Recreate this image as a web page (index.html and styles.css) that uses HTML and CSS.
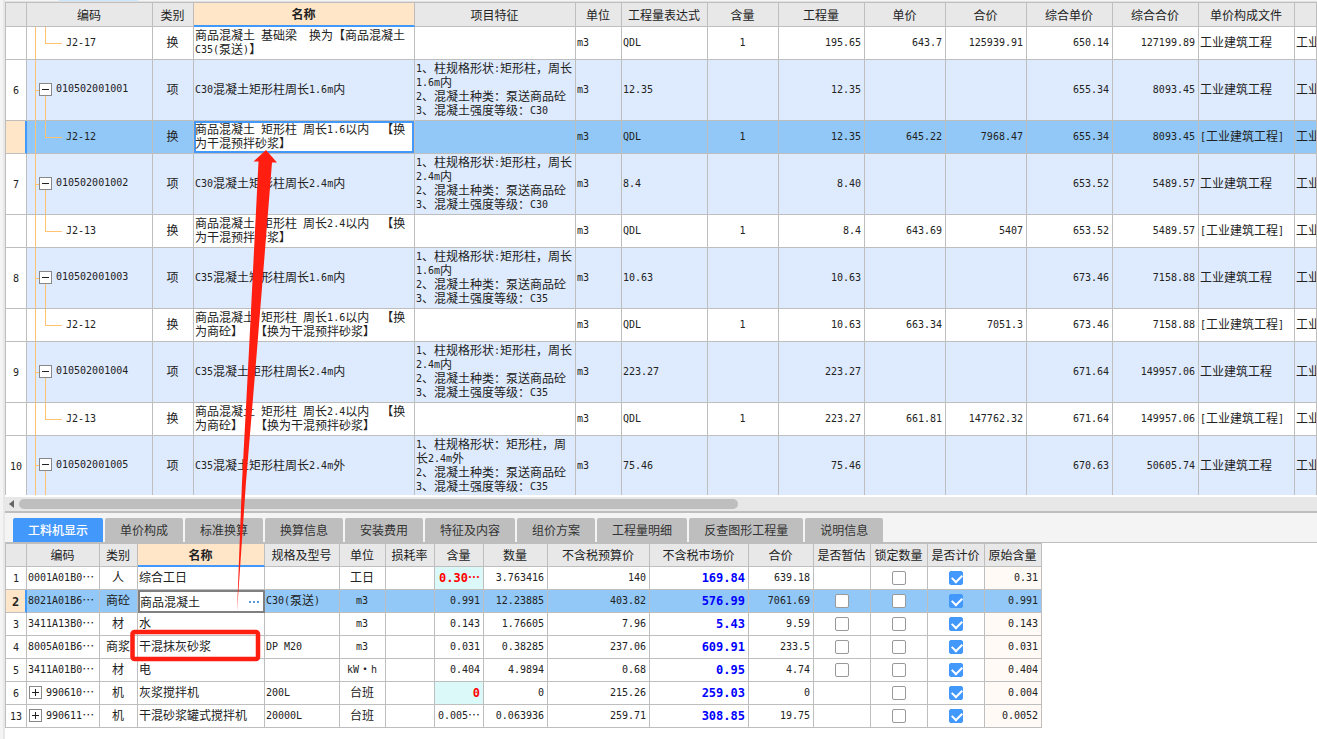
FILE: index.html
```
<!DOCTYPE html>
<html lang="zh-CN">
<head>
<meta charset="utf-8">
<title>工程量清单计价</title>
<link rel="stylesheet" href="styles.css">
</head>
<body>
<div class="gutter"></div>
<main class="main">
<div class="top-strip"></div>
<section class="bill">
<table class="grid bill-grid">
<colgroup><col class="w21"><col class="w126"><col class="w41"><col class="w221"><col class="w161"><col class="w46"><col class="w86"><col class="w71"><col class="w86"><col class="w81"><col class="w81"><col class="w86"><col class="w86"><col class="w96"><col></colgroup>
<thead><tr><th></th><th>编码</th><th>类别</th><th class="active">名称</th><th>项目特征</th><th>单位</th><th>工程量表达式</th><th>含量</th><th>工程量</th><th>单价</th><th>合价</th><th>综合单价</th><th>综合合价</th><th>单价构成文件</th><th></th></tr></thead>
<tbody>
<tr class="sub"><td class="no"></td><td class="tree leaf"><i>J2-17</i></td><td class="c">换</td><td>商品混凝土<i> </i>基础梁<i>  </i>换为【商品混凝土<br><i>C35(</i>泵送<i>)</i>】</td><td></td><td><i>m3</i></td><td><i>QDL</i></td><td class="c"><i>1</i></td><td class="r"><i>195.65</i></td><td class="r"><i>643.7</i></td><td class="r"><i>125939.91</i></td><td class="r"><i>650.14</i></td><td class="r"><i>127199.89</i></td><td>工业建筑工程</td><td>工业建筑工程</td></tr>
<tr class="item"><td class="no"><i>6</i></td><td class="tree node"><div class="code"><button class="toggle minus" aria-label="折叠"></button><i>010502001001</i></div></td><td class="c">项</td><td><i>C30</i>混凝土矩形柱周长<i>1.6m</i>内</td><td><i>1</i>、柱规格形状<i>:</i>矩形柱，周长<br><i>1.6m</i>内<br><i>2</i>、混凝土种类：泵送商品砼<br><i>3</i>、混凝土强度等级：<i>C30</i></td><td><i>m3</i></td><td><i>12.35</i></td><td></td><td class="r"><i>12.35</i></td><td></td><td></td><td class="r"><i>655.34</i></td><td class="r"><i>8093.45</i></td><td>工业建筑工程</td><td>工业建筑工程</td></tr>
<tr class="sub selected"><td class="no"></td><td class="tree leaf"><i>J2-12</i></td><td class="c">换</td><td class="focus">商品混凝土<i> </i>矩形柱<i> </i>周长<i>1.6</i>以内<i>  </i>【换<br>为干混预拌砂浆】</td><td></td><td><i>m3</i></td><td><i>QDL</i></td><td class="c"><i>1</i></td><td class="r"><i>12.35</i></td><td class="r"><i>645.22</i></td><td class="r"><i>7968.47</i></td><td class="r"><i>655.34</i></td><td class="r"><i>8093.45</i></td><td><i>[</i>工业建筑工程<i>]</i></td><td>工业建筑工程</td></tr>
<tr class="item"><td class="no"><i>7</i></td><td class="tree node"><div class="code"><button class="toggle minus" aria-label="折叠"></button><i>010502001002</i></div></td><td class="c">项</td><td><i>C30</i>混凝土矩形柱周长<i>2.4m</i>内</td><td><i>1</i>、柱规格形状<i>:</i>矩形柱，周长<br><i>2.4m</i>内<br><i>2</i>、混凝土种类：泵送商品砼<br><i>3</i>、混凝土强度等级：<i>C30</i></td><td><i>m3</i></td><td><i>8.4</i></td><td></td><td class="r"><i>8.40</i></td><td></td><td></td><td class="r"><i>653.52</i></td><td class="r"><i>5489.57</i></td><td>工业建筑工程</td><td>工业建筑工程</td></tr>
<tr class="sub"><td class="no"></td><td class="tree leaf"><i>J2-13</i></td><td class="c">换</td><td>商品混凝土<i> </i>矩形柱<i> </i>周长<i>2.4</i>以内<i>  </i>【换<br>为干混预拌砂浆】</td><td></td><td><i>m3</i></td><td><i>QDL</i></td><td class="c"><i>1</i></td><td class="r"><i>8.4</i></td><td class="r"><i>643.69</i></td><td class="r"><i>5407</i></td><td class="r"><i>653.52</i></td><td class="r"><i>5489.57</i></td><td><i>[</i>工业建筑工程<i>]</i></td><td>工业建筑工程</td></tr>
<tr class="item"><td class="no"><i>8</i></td><td class="tree node"><div class="code"><button class="toggle minus" aria-label="折叠"></button><i>010502001003</i></div></td><td class="c">项</td><td><i>C35</i>混凝土矩形柱周长<i>1.6m</i>内</td><td><i>1</i>、柱规格形状<i>:</i>矩形柱，周长<br><i>1.6m</i>内<br><i>2</i>、混凝土种类：泵送商品砼<br><i>3</i>、混凝土强度等级：<i>C35</i></td><td><i>m3</i></td><td><i>10.63</i></td><td></td><td class="r"><i>10.63</i></td><td></td><td></td><td class="r"><i>673.46</i></td><td class="r"><i>7158.88</i></td><td>工业建筑工程</td><td>工业建筑工程</td></tr>
<tr class="sub"><td class="no"></td><td class="tree leaf"><i>J2-12</i></td><td class="c">换</td><td>商品混凝土<i> </i>矩形柱<i> </i>周长<i>1.6</i>以内<i>  </i>【换<br>为商砼】<i>  </i>【换为干混预拌砂浆】</td><td></td><td><i>m3</i></td><td><i>QDL</i></td><td class="c"><i>1</i></td><td class="r"><i>10.63</i></td><td class="r"><i>663.34</i></td><td class="r"><i>7051.3</i></td><td class="r"><i>673.46</i></td><td class="r"><i>7158.88</i></td><td><i>[</i>工业建筑工程<i>]</i></td><td>工业建筑工程</td></tr>
<tr class="item"><td class="no"><i>9</i></td><td class="tree node"><div class="code"><button class="toggle minus" aria-label="折叠"></button><i>010502001004</i></div></td><td class="c">项</td><td><i>C35</i>混凝土矩形柱周长<i>2.4m</i>内</td><td><i>1</i>、柱规格形状<i>:</i>矩形柱，周长<br><i>2.4m</i>内<br><i>2</i>、混凝土种类：泵送商品砼<br><i>3</i>、混凝土强度等级：<i>C35</i></td><td><i>m3</i></td><td><i>223.27</i></td><td></td><td class="r"><i>223.27</i></td><td></td><td></td><td class="r"><i>671.64</i></td><td class="r"><i>149957.06</i></td><td>工业建筑工程</td><td>工业建筑工程</td></tr>
<tr class="sub"><td class="no"></td><td class="tree leaf"><i>J2-13</i></td><td class="c">换</td><td>商品混凝土<i> </i>矩形柱<i> </i>周长<i>2.4</i>以内<i>  </i>【换<br>为商砼】<i>  </i>【换为干混预拌砂浆】</td><td></td><td><i>m3</i></td><td><i>QDL</i></td><td class="c"><i>1</i></td><td class="r"><i>223.27</i></td><td class="r"><i>661.81</i></td><td class="r"><i>147762.32</i></td><td class="r"><i>671.64</i></td><td class="r"><i>149957.06</i></td><td><i>[</i>工业建筑工程<i>]</i></td><td>工业建筑工程</td></tr>
<tr class="item last"><td class="no"><i>10</i></td><td class="tree node"><div class="code"><button class="toggle minus" aria-label="折叠"></button><i>010502001005</i></div></td><td class="c">项</td><td><i>C35</i>混凝土矩形柱周长<i>2.4m</i>外</td><td><i>1</i>、柱规格形状：矩形柱，周<br>长<i>2.4m</i>外<br><i>2</i>、混凝土种类：泵送商品砼<br><i>3</i>、混凝土强度等级：<i>C35</i></td><td><i>m3</i></td><td><i>75.46</i></td><td></td><td class="r"><i>75.46</i></td><td></td><td></td><td class="r"><i>670.63</i></td><td class="r"><i>50605.74</i></td><td>工业建筑工程</td><td>工业建筑工程</td></tr>
</tbody>
</table>
</section>
<div class="scrollbar"><svg class="scroll-arrow" viewBox="0 0 5 8"><path d="M5 0v8L0 4z" fill="#666"/></svg><div class="thumb"></div></div>
<nav class="tabs">
<button class="tab on">工料机显示</button><button class="tab">单价构成</button><button class="tab">标准换算</button><button class="tab">换算信息</button><button class="tab">安装费用</button><button class="tab">特征及内容</button><button class="tab">组价方案</button><button class="tab">工程量明细</button><button class="tab">反查图形工程量</button><button class="tab">说明信息</button>
</nav>
<section class="detail">
<table class="grid detail-grid">
<colgroup><col class="w21"><col class="w73"><col class="w38"><col class="w127"><col class="w75"><col class="w46"><col class="w49"><col class="w49"><col class="w64"><col class="w102"><col class="w99"><col class="w65"><col class="w57"><col class="w57"><col class="w57"><col class="w57"></colgroup>
<thead><tr><th></th><th>编码</th><th>类别</th><th class="active">名称</th><th>规格及型号</th><th>单位</th><th>损耗率</th><th>含量</th><th>数量</th><th>不含税预算价</th><th>不含税市场价</th><th>合价</th><th>是否暂估</th><th>锁定数量</th><th>是否计价</th><th>原始含量</th></tr></thead>
<tbody>
<tr><td class="no"><i>1</i></td><td><i>0001A01B0</i>⋯</td><td class="c">人</td><td>综合工日</td><td></td><td class="c">工日</td><td></td><td class="r changed"><b>0.30</b>⋯</td><td class="r"><i>3.763416</i></td><td class="r"><i>140</i></td><td class="r price"><b>169.84</b></td><td class="r"><i>639.18</i></td><td></td><td class="c"><input type="checkbox" aria-label="锁定数量"></td><td class="c"><input type="checkbox" aria-label="是否计价" checked></td><td class="r orig"><i>0.31</i></td></tr>
<tr class="selected"><td class="no"><b>2</b></td><td><i>8021A01B6</i>⋯</td><td class="c">商砼</td><td class="editing"><div class="editor"><input type="text" aria-label="名称" value="商品混凝土"><button class="more" aria-label="更多"><svg viewBox="0 0 11 2"><path d="M0 0h2v2H0zM4 0h2v2H4zM8 0h2v2H8z" fill="#5799d6"/></svg></button></div></td><td><i>C30(</i>泵送<i>)</i></td><td class="c"><i>m3</i></td><td></td><td class="r"><i>0.991</i></td><td class="r"><i>12.23885</i></td><td class="r"><i>403.82</i></td><td class="r price"><b>576.99</b></td><td class="r"><i>7061.69</i></td><td class="c"><input type="checkbox" aria-label="是否暂估"></td><td class="c"><input type="checkbox" aria-label="锁定数量"></td><td class="c"><input type="checkbox" aria-label="是否计价" checked></td><td class="r orig"><i>0.991</i></td></tr>
<tr><td class="no"><i>3</i></td><td><i>3411A13B0</i>⋯</td><td class="c">材</td><td>水</td><td></td><td class="c"><i>m3</i></td><td></td><td class="r"><i>0.143</i></td><td class="r"><i>1.76605</i></td><td class="r"><i>7.96</i></td><td class="r price"><b>5.43</b></td><td class="r"><i>9.59</i></td><td class="c"><input type="checkbox" aria-label="是否暂估"></td><td class="c"><input type="checkbox" aria-label="锁定数量"></td><td class="c"><input type="checkbox" aria-label="是否计价" checked></td><td class="r orig"><i>0.143</i></td></tr>
<tr><td class="no"><i>4</i></td><td><i>8005A01B6</i>⋯</td><td class="c">商浆</td><td>干混抹灰砂浆</td><td><i>DP M20</i></td><td class="c"><i>m3</i></td><td></td><td class="r"><i>0.031</i></td><td class="r"><i>0.38285</i></td><td class="r"><i>237.06</i></td><td class="r price"><b>609.91</b></td><td class="r"><i>233.5</i></td><td class="c"><input type="checkbox" aria-label="是否暂估"></td><td class="c"><input type="checkbox" aria-label="锁定数量"></td><td class="c"><input type="checkbox" aria-label="是否计价" checked></td><td class="r orig"><i>0.031</i></td></tr>
<tr><td class="no"><i>5</i></td><td><i>3411A01B0</i>⋯</td><td class="c">材</td><td>电</td><td></td><td class="c"><i>kW</i>・<i>h</i></td><td></td><td class="r"><i>0.404</i></td><td class="r"><i>4.9894</i></td><td class="r"><i>0.68</i></td><td class="r price"><b>0.95</b></td><td class="r"><i>4.74</i></td><td class="c"><input type="checkbox" aria-label="是否暂估"></td><td class="c"><input type="checkbox" aria-label="锁定数量"></td><td class="c"><input type="checkbox" aria-label="是否计价" checked></td><td class="r orig"><i>0.404</i></td></tr>
<tr><td class="no"><i>6</i></td><td><div class="code"><button class="toggle plus" aria-label="展开"></button><span><i>990610</i>⋯</span></div></td><td class="c">机</td><td>灰浆搅拌机</td><td><i>200L</i></td><td class="c">台班</td><td></td><td class="r changed"><b>0</b></td><td class="r"><i>0</i></td><td class="r"><i>215.26</i></td><td class="r price"><b>259.03</b></td><td class="r"><i>0</i></td><td></td><td class="c"><input type="checkbox" aria-label="锁定数量"></td><td class="c"><input type="checkbox" aria-label="是否计价" checked></td><td class="r orig"><i>0.004</i></td></tr>
<tr><td class="no"><i>13</i></td><td><div class="code"><button class="toggle plus" aria-label="展开"></button><span><i>990611</i>⋯</span></div></td><td class="c">机</td><td>干混砂浆罐式搅拌机</td><td><i>20000L</i></td><td class="c">台班</td><td></td><td class="r"><i>0.005</i>⋯</td><td class="r"><i>0.063936</i></td><td class="r"><i>259.71</i></td><td class="r price"><b>308.85</b></td><td class="r"><i>19.75</i></td><td></td><td class="c"><input type="checkbox" aria-label="锁定数量"></td><td class="c"><input type="checkbox" aria-label="是否计价" checked></td><td class="r orig"><i>0.0052</i></td></tr>
</tbody>
</table>
</section>
</main>
<svg class="marks" width="300" height="700" viewBox="0 0 300 700" aria-hidden="true">
<path d="M266 150L277 162.500H272L257 350L246 482L237 612L242 482L249 350L258.500 161.500H253.500Z" fill="#ff1e10"/>
<rect x="132.500" y="632" width="125.500" height="27" rx="2" fill="none" stroke="#ff1e10" stroke-width="4.500"/>
</svg>
</body>
</html>
```
FILE: styles.css
```
* { box-sizing: border-box; }
html, body { height: 100%; }
body {
  margin: 0;
  display: flex;
  position: relative;
  overflow: hidden;
  background: #fff;
  color: #222;
  font: 12px/14px "Noto Sans CJK SC", sans-serif;
}
.gutter { flex: none; width: 5px; background: #f4f4f4; border-right: 2px solid #e7e7e7; }
.main { flex: 1; min-width: 0; display: flex; flex-direction: column; }
.top-strip {
  height: 2px;
  border-bottom: 1px solid #e0e0e0;
  background: linear-gradient(#cce8ff, #cce8ff) 54px 0 / 79px 1px no-repeat #f4f4f4;
}
i, b { font-family: "DejaVu Sans Mono", monospace; font-size: 10px; font-style: normal; white-space: pre; line-height: 1; vertical-align: 1px; }
b { font-size: 12px; vertical-align: baseline; }

/* grids */
.grid { table-layout: fixed; border-collapse: separate; border-spacing: 0; border: solid #bebebe; border-width: 1px 0 0 1px; }
.grid th, .grid td {
  padding: 0 3px 2px 1px;
  border: solid #bebebe;
  border-width: 0 1px 1px 0;
  text-align: left;
  vertical-align: middle;
  white-space: nowrap;
  overflow: hidden;
}
.grid th { padding: 0 1px 0 0; background: #e8e8e8; font-weight: 400; text-align: center; }
.grid th.active { background: #ffe6c8; font-weight: 700; border-bottom: 2px solid #4398fc; }
.grid td.c { text-align: center; padding: 0 1px 2px 0; }
.grid td.no { text-align: center; padding: 0; }
.grid td.r { text-align: right; }
.grid .item td { background-color: #deeafe; }
.grid .selected td { background-color: #91c8f7; }
.grid td.no, .grid .item td.no { background-color: #fff; }
.grid .selected td.no { background-color: #ffe6c8; border-right: 2px solid #4398fc; }
.grid .selected td.focus { background-color: #fff; box-shadow: inset 0 0 0 2px #4398fc; }

.bill { overflow: hidden; border-bottom: 2px solid #fff; }
.bill-grid { width: 100%; }
.bill-grid th { height: 24px; }
.sub td { height: 33px; }
.item td { height: 61px; }
.item.last td { height: 59px; border-bottom: 0; }

.w21 { width: 21px; } .w38 { width: 38px; } .w41 { width: 41px; } .w46 { width: 46px; }
.w49 { width: 49px; } .w57 { width: 57px; } .w64 { width: 64px; } .w65 { width: 65px; }
.w71 { width: 71px; } .w73 { width: 73px; } .w75 { width: 75px; } .w81 { width: 81px; }
.w86 { width: 86px; } .w96 { width: 96px; } .w99 { width: 99px; } .w102 { width: 102px; }
.w126 { width: 126px; } .w127 { width: 127px; } .w161 { width: 161px; } .w221 { width: 221px; }

/* tree column */
.tree { background-repeat: no-repeat; background-image: linear-gradient(#ffc373, #ffc373), linear-gradient(#ffc373, #ffc373), linear-gradient(#ffc373, #ffc373); }
.grid td.leaf { padding-left: 39px; background-size: 1px 100%, 1px 50%, 17px 1px; background-position: 8px 0, 18px 0, 18px 50%; }
.grid td.node { padding-left: 12px; background-size: 1px 100%, 1px 50%, 5px 1px; background-position: 8px 0, 18px 100%, 8px 50%; }
.code { display: flex; align-items: center; gap: 4px; }
.toggle { flex: none; width: 13px; height: 13px; padding: 0; border: 1px solid #888; background: linear-gradient(#222, #222) center / 7px 1px no-repeat #fff; }
.toggle.plus { margin-left: 1px; background: linear-gradient(#222, #222) center / 7px 1px no-repeat, linear-gradient(#222, #222) center / 1px 7px no-repeat, #fff; }

.scrollbar { display: flex; align-items: center; gap: 5px; height: 16px; padding-left: 4px; background: #e7e7e7; border-bottom: 2px solid #bebebe; }
.scroll-arrow { width: 5px; height: 8px; }
.thumb { width: 55%; height: 10px; border-radius: 5px; background: #bebebe; }

.tabs { display: flex; gap: 2px; height: 29px; padding: 5px 0 0 8px; background: #f4f4f4; }
.tab { height: 24px; padding: 0 15px; border: 0; border-radius: 2px 2px 0 0; background: #bebebe; color: #333; font: inherit; }
.tab.on { background: #4398fc; color: #fff; font-weight: 500; }

.detail { border-top: 1px solid #bebebe; }
/* a minimal width makes the fixed layout take exactly the column widths */
.detail-grid { width: 1px; }
.detail-grid th { height: 23px; }
.detail-grid td { height: 23px; }
.grid td.changed { background: #dbf9f9; color: #f00; font-weight: 700; }
.price { color: #00f; }
.grid td.orig { background-color: #fffaf5; }
.grid .selected td.orig { background-color: #91c8f7; }
.grid .selected td.editing { padding: 0; border: 2px solid #808080; background: #fff; }
.editor { display: flex; align-items: center; }
.editor input { flex: 1; min-width: 0; height: 18px; padding: 0 0 1px; border: 0; outline: 0; background: none; color: inherit; font: inherit; }
.more { display: flex; padding: 0 3px; border: 0; background: none; }
.more svg { width: 11px; height: 2px; }

input[type="checkbox"] { appearance: none; display: block; position: relative; width: 14px; height: 14px; margin: 1px auto 0; border: 1px solid #999; border-radius: 2px; background: #fff; }
input[type="checkbox"]:checked { border-color: #4398fc; background: #4398fc; }
input[type="checkbox"]:checked::after { content: ""; position: absolute; left: 2px; top: 2px; width: 8px; height: 5px; border: solid #fff; border-width: 0 0 2px 2px; transform: rotate(-45deg); }

.marks { position: absolute; left: 0; top: 0; pointer-events: none; }
```
